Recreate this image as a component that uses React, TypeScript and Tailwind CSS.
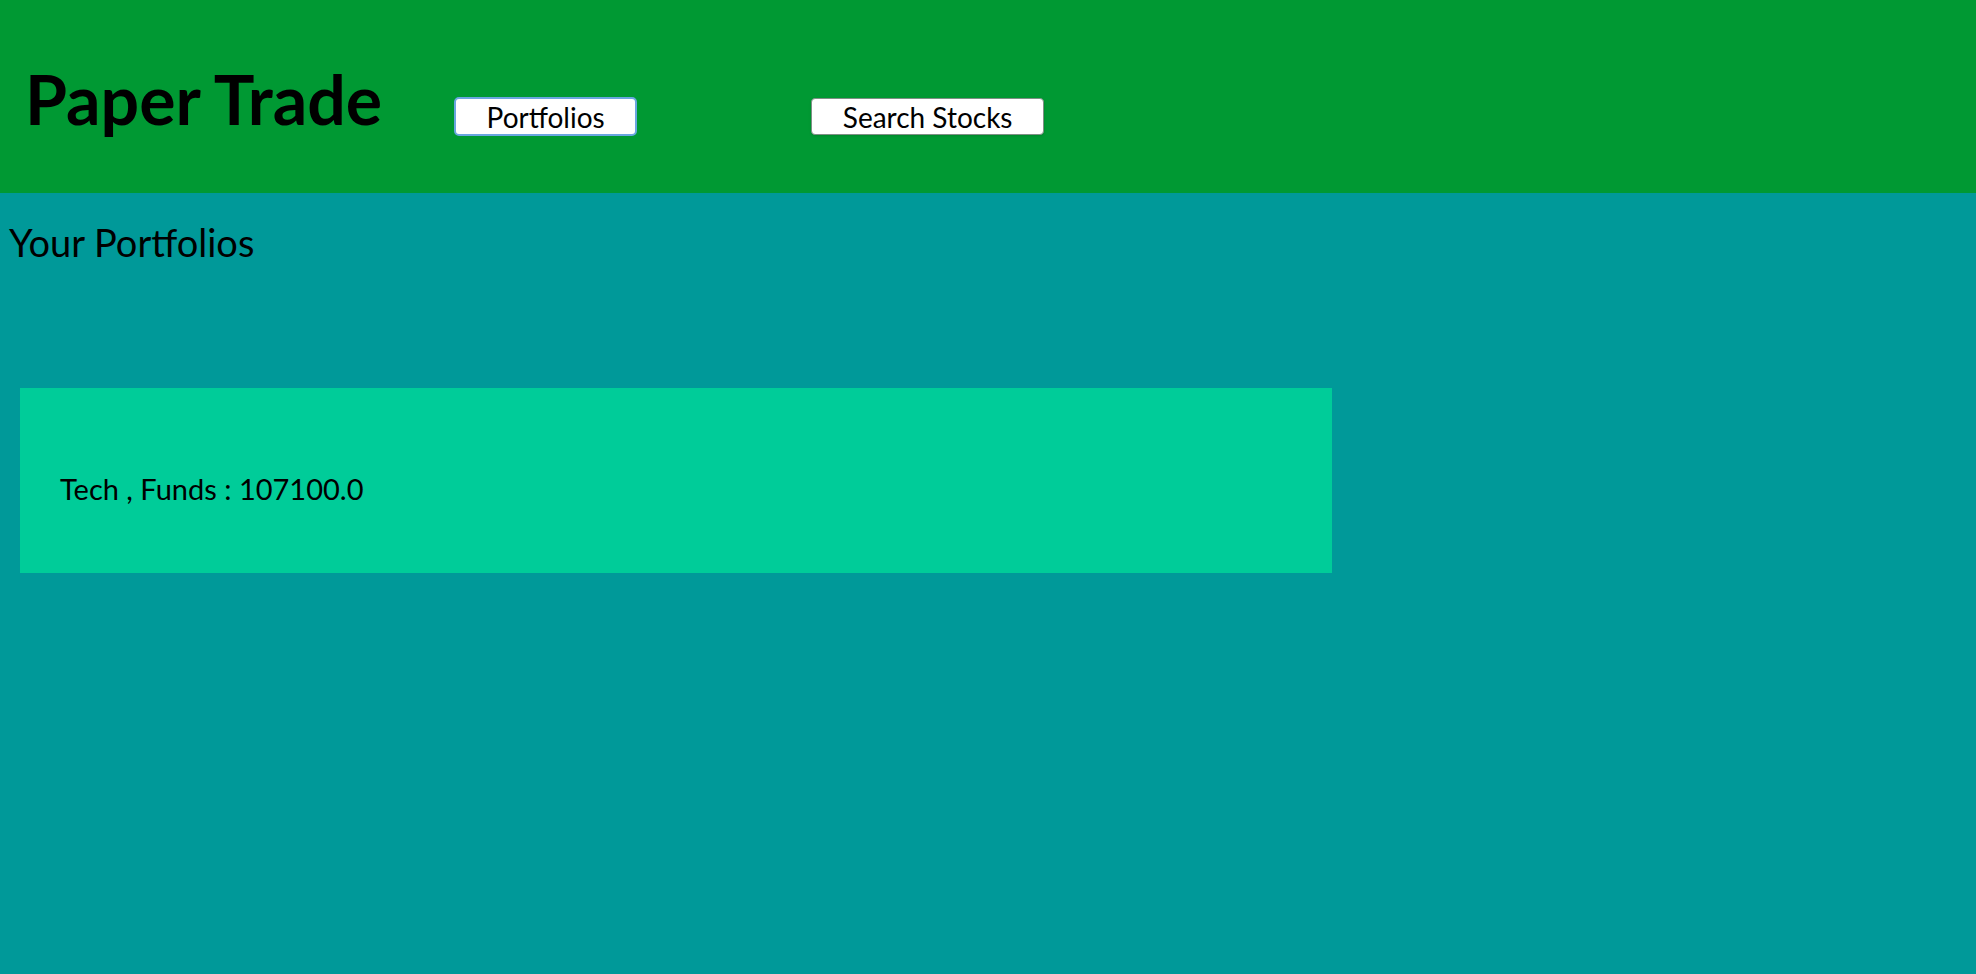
export default function App() {
  return (
    <div className="min-h-screen flex flex-col bg-[#009999] font-['Lato','Liberation_Sans',sans-serif] text-black">
      <header className="h-[193px] bg-[#009933] flex items-start pl-[25px]">
        <h1 className="mt-[60px] text-[68px] leading-[78px] font-bold">Paper Trade</h1>
        <button className="ml-[72px] mt-[97px] w-[183px] h-[39px] bg-white rounded-[5px] border-2 border-[#6aa6e0] text-[28px] leading-none">
          Portfolios
        </button>
        <button className="ml-[174px] mt-[98px] w-[233px] h-[37px] bg-white rounded-[4px] border border-[#7f8f85] shadow-sm text-[28px] leading-none">
          Search Stocks
        </button>
      </header>
      <main className="flex-1">
        <h2 className="pl-[9px] pt-[29px] text-[38px] leading-[40px]">Your Portfolios</h2>
        <div className="mt-[126px] ml-[20px] w-[1312px] h-[185px] bg-[#00cc99] pl-[40px] pt-[84px]">
          <p className="text-[29px] leading-[34px]">Tech , Funds : 107100.0</p>
        </div>
      </main>
    </div>
  );
}
